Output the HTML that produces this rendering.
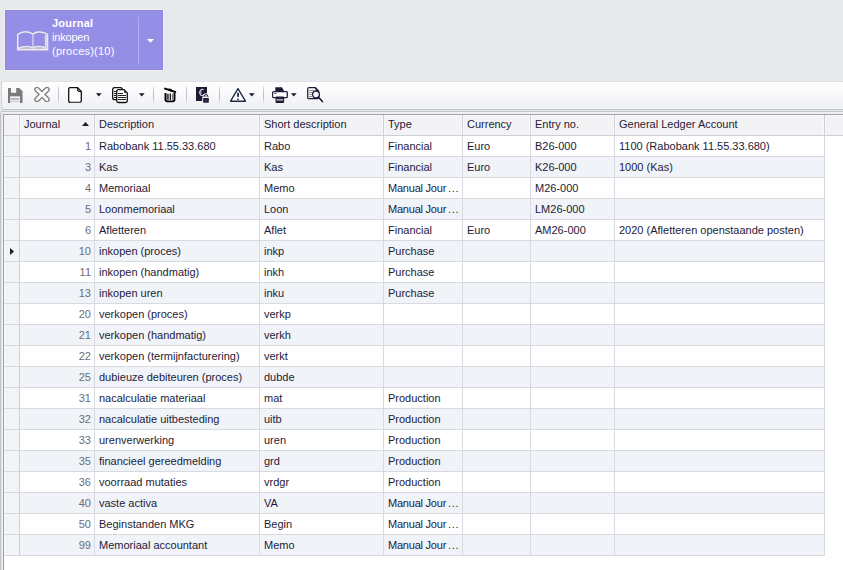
<!DOCTYPE html><html><head><meta charset="utf-8"><style>*{margin:0;padding:0;box-sizing:border-box}
html,body{width:843px;height:570px;overflow:hidden;background:#e8e9ed;font-family:"Liberation Sans",sans-serif;font-size:11px;position:relative}
#tile{position:absolute;left:4px;top:9px;width:160px;height:62px;background:#eef0e9}
#tile .in{position:absolute;left:1px;top:1px;width:158px;height:60px;background:#958ee7;border:1px solid #908ae6}
#tile .t{position:absolute;left:48px;color:#fff;white-space:nowrap;line-height:14px;letter-spacing:0.22px}
#tile .div{position:absolute;left:134px;top:8px;width:1px;height:47px;background:#b2adf0}
#tb{position:absolute;left:1px;top:81px;width:850px;height:29px;border-radius:3px 0 0 3px;background:linear-gradient(#fefefe,#fcfcfd 25%,#f2f3f7 75%,#eff0f4 96%,#f8f9fb 96%);border:1px solid #e0e1e5;border-bottom-color:#b9bbc2;border-left-color:#d4d5da;border-right:none}
.sep{position:absolute;top:84px;width:1px;height:21px;background:linear-gradient(rgba(190,192,200,0),#bfc1c8 35%,#bfc1c8 65%,rgba(190,192,200,0))}
.ic{position:absolute}
#panel{position:absolute;left:0;top:111px;width:850px;height:470px;background:#eeeff2;border:1px solid #c3c4c9;border-right:none;border-radius:3px 0 0 0}
#panel2{position:absolute;left:1px;top:112px;width:850px;height:470px;border-left:1px solid #e3e4e8;}
#gridbg{position:absolute;left:3px;top:114px;width:840px;height:456px;background:#fff;border-left:1px solid #9d9fab;border-top:1px solid #9d9fab}
.hdr{position:absolute;left:4px;top:115px;width:839px;height:21px;background:#f3f3f5;border-top:1px solid #fbfbfc;border-bottom:1px solid #cfd0d6}
.hl4{position:absolute;left:4px;top:115px;width:1px;height:455px;background:#fafbfc}
.hv{position:absolute;top:115px;width:1px;height:20px;background:#cfd0d6}
.hvl{position:absolute;top:116px;width:1px;height:19px;background:#f9f9fb}
.ht{position:absolute;top:115px;line-height:20px;height:20px;color:#1e1b38;white-space:nowrap;margin-top:-1px}
.sort{position:absolute;left:82px;top:122px}
.rh{position:absolute;left:5px;width:14px;height:20px;background:#f3f4f6}
.row{position:absolute;left:20px;width:804px;height:20px;background:#fff}
.row.st{background:#f0f3f8}
.hl{position:absolute;left:4px;width:820px;height:1px;background:#d9dadf}
.bv{position:absolute;top:136px;width:1px;height:420px;background:#d9dadf}
.rhv{position:absolute;left:19px;top:135px;width:1px;height:421px;background:#cfd0d6}
.num{position:absolute;left:20px;width:71px;text-align:right;line-height:20px;color:#6d6c78;white-space:nowrap}
.tx{position:absolute;line-height:20px;color:#1e1b38;white-space:nowrap}
.arrowsel{position:absolute;left:10px;top:248px;width:0;height:0;border-left:4px solid #1a1830;border-top:3.5px solid transparent;border-bottom:3.5px solid transparent}
</style></head><body>
<div id="tile"><div class="in"></div>
<svg style="position:absolute;left:10px;top:19px" width="40" height="25" viewBox="0 0 40 25"><g fill="none" stroke="#ecece4" stroke-width="1.5" stroke-linejoin="round">
<path d="M3.7 21.2 V6.4 Q8.5 3.2 13.5 4 Q17 4.6 19 6.2"/>
<path d="M19 6.2 Q21 4.5 24 4 Q29.5 3.4 33.5 6.4 V21.2"/>
<path d="M4 20.4 Q8 18.6 13 18.6 Q16.5 18.8 19 19.8 Q22 18.6 25 18.6 Q29 18.8 32 20.2"/>
</g>
<path d="M19 6.2 V19.8" stroke="#e4e3ea" stroke-width="1.1"/>
<rect x="2.9" y="20.5" width="31.4" height="2" fill="#ecece4"/>
<rect x="30.8" y="7" width="2" height="12.5" fill="#dedce8"/>
</svg>
<div class="t" style="top:7px;font-weight:bold">Journal</div>
<div class="t" style="top:21px;letter-spacing:-0.2px">inkopen</div>
<div class="t" style="top:35px">(proces)(10)</div>
<div class="div"></div>
<svg style="position:absolute;left:142px;top:29px" width="10" height="6" viewBox="0 0 10 6"><path d="M1 1 H8 L4.5 4.8Z" fill="#fff"/></svg>
</div>
<div id="panel"></div><div id="panel2"></div><div id="tb"></div>
<div class="sep" style="left:58px"></div>
<div class="sep" style="left:153px"></div>
<div class="sep" style="left:186px"></div>
<div class="sep" style="left:219px"></div>
<div class="sep" style="left:263px"></div>
<!-- save -->
<svg class="ic" style="left:8px;top:88px" width="15" height="15" viewBox="0 0 15 15">
<path d="M0 0 H11.3 L14.5 3.2 V15 H0 Z" fill="#7b7b7b"/>
<rect x="3" y="0" width="5.2" height="4.8" fill="#f7f7f7"/>
<rect x="2.2" y="8.3" width="9.8" height="6.7" fill="#f4f4f4"/>
<rect x="2.8" y="10" width="8.6" height="2" fill="#b8b8b8"/>
<rect x="2.8" y="13" width="8.6" height="1" fill="#c4c4c4"/>
</svg>
<!-- cancel X -->
<svg class="ic" style="left:34px;top:87px" width="16" height="15" viewBox="0 0 16 15">
<g stroke-linecap="round"><path d="M3 2.5 L13 12.5 M13 2.5 L3 12.5" stroke="#7e7e7e" stroke-width="5.5"/>
<path d="M3 2.5 L13 12.5 M13 2.5 L3 12.5" stroke="#fbfbfb" stroke-width="3"/></g>
</svg>
<!-- new doc -->
<svg class="ic" style="left:67px;top:86px" width="16" height="18" viewBox="0 0 16 18">
<path d="M1.7 3.2 Q1.7 1.7 3.2 1.7 H10.6 L14.3 5.4 V14.8 Q14.3 16.3 12.8 16.3 H3.2 Q1.7 16.3 1.7 14.8 Z" fill="#fff" stroke="#111" stroke-width="1.3"/>
<path d="M10.6 1.7 V4 Q10.6 5.4 12 5.4 H14.3 Z" fill="#8a8a8a" stroke="#111" stroke-width="1"/>
<path d="M3 16.5 H13" stroke="#555" stroke-width="0.9"/>
</svg>
<svg class="ic dd" style="left:96px;top:93px" width="6" height="4" viewBox="0 0 6 4"><path d="M0 0.2 H5.6 L2.8 3.6Z" fill="#15142b"/></svg>
<!-- copy -->
<svg class="ic" style="left:111px;top:86px" width="18" height="18" viewBox="0 0 18 18">
<rect x="1.7" y="1.7" width="9.6" height="12" rx="2" fill="#fff" stroke="#111" stroke-width="1.3"/>
<path d="M3 5.5 H5 M3 7.5 H5 M3 9.5 H5 M3 11.5 H5" stroke="#222" stroke-width="1"/>
<path d="M5.7 5.5 Q5.7 3.7 7.5 3.7 H13 L16.3 7 V14.8 Q16.3 16.5 14.6 16.5 H7.5 Q5.7 16.5 5.7 14.7 Z" fill="#fff" stroke="#111" stroke-width="1.3"/>

<path d="M13 3.7 V6 Q13 7 14 7 H16.3 Z" fill="#333"/>
<path d="M7 7.5 H12 M7 9.5 H15 M7 11.5 H15 M7 13.5 H15" stroke="#222" stroke-width="1"/>
</svg>
<svg class="ic dd" style="left:139px;top:93px" width="6" height="4" viewBox="0 0 6 4"><path d="M0 0.2 H5.6 L2.8 3.6Z" fill="#15142b"/></svg>
<!-- trash -->
<svg class="ic" style="left:163px;top:86px" width="14" height="18" viewBox="0 0 14 18">
<path d="M2 2.6 L12.3 6" stroke="#000" stroke-width="1.9" stroke-linecap="round"/>
<ellipse cx="7.2" cy="3.9" rx="2" ry="1.1" transform="rotate(18 7.2 3.9)" fill="#000"/>
<path d="M2.5 7 V13.6 Q2.5 15.4 4.3 15.4 H9.7 Q11.5 15.4 11.5 13.6 V7" fill="none" stroke="#000" stroke-width="1.9"/>
<rect x="3.8" y="7.8" width="2" height="6" fill="#4a4a4a"/>
<rect x="6.7" y="7.5" width="1.3" height="6.4" fill="#111"/>
<rect x="9" y="7.8" width="1" height="6" fill="#777"/>
</svg>
<!-- euro lock -->
<svg class="ic" style="left:195px;top:86px" width="15" height="18" viewBox="0 0 15 18">
<rect x="1" y="1" width="11" height="14" fill="#1c1a35"/>
<path d="M8.6 3.6 Q5.3 2.6 4.8 6.4 Q5.2 10.3 8 9.6" fill="none" stroke="#d8d8de" stroke-width="1.2"/>
<path d="M3.8 5.6 H7 M3.8 7.2 H7" stroke="#b8b8c0" stroke-width="0.8"/>
<path d="M9.2 12 V10.4 Q9.2 8.6 11 8.6 Q12.8 8.6 12.8 10.4 V12" fill="none" stroke="#ececf2" stroke-width="2.8"/>
<path d="M9.2 12 V10.4 Q9.2 8.6 11 8.6 Q12.8 8.6 12.8 10.4 V12" fill="none" stroke="#1c1a35" stroke-width="1"/>
<rect x="7.2" y="11" width="7.6" height="6.7" rx="0.8" fill="#f3f4f7"/>
<rect x="8.2" y="12" width="5.6" height="4.7" fill="#1c1a35"/>
<rect x="10.5" y="13.8" width="1" height="1" fill="#8888a0"/>
</svg>
<!-- warning -->
<svg class="ic" style="left:229px;top:87px" width="18" height="16" viewBox="0 0 18 16">
<path d="M9 1.7 L1.6 14.2 H16.4 Z" fill="#fff" stroke="#1e2842" stroke-width="1.35" stroke-linejoin="round"/>
<rect x="8.1" y="5.7" width="1.8" height="4.2" fill="#1e2842"/>
<rect x="8.1" y="11.6" width="1.8" height="1.3" fill="#1e2842"/>
</svg>
<svg class="ic dd" style="left:249px;top:93px" width="6" height="4" viewBox="0 0 6 4"><path d="M0 0.2 H5.6 L2.8 3.6Z" fill="#15142b"/></svg>
<!-- printer -->
<svg class="ic" style="left:271px;top:87px" width="18" height="17" viewBox="0 0 18 17">
<path d="M4.3 0.2 H11 L13.3 4.6 H4.3 Z" fill="#1c1a35"/>
<rect x="1.6" y="4.6" width="14.8" height="6" rx="1" fill="#fff" stroke="#1c1a35" stroke-width="1.15"/>
<rect x="3" y="6" width="2.5" height="1" fill="#666"/>
<path d="M15.6 5.5 V10" stroke="#999" stroke-width="0.8"/>
<rect x="4.5" y="9.4" width="8.6" height="6.6" rx="0.9" fill="#1c1a35"/>
<rect x="5.5" y="11.9" width="6.6" height="1.9" fill="#9a9aaa"/>
</svg>
<svg class="ic dd" style="left:291px;top:93px" width="6" height="4" viewBox="0 0 6 4"><path d="M0 0.2 H5.6 L2.8 3.6Z" fill="#15142b"/></svg>
<!-- preview -->
<svg class="ic" style="left:306px;top:86px" width="18" height="18" viewBox="0 0 18 18">
<path d="M12.6 5 V11.5 Q12.6 12.7 11.4 12.7 H3 Q1.7 12.7 1.7 11.4 V3 Q1.7 1.7 3 1.7 H9.4 Z" fill="#fff" stroke="#1c1a35" stroke-width="1.25"/>
<path d="M9.6 1.8 L10 4.4 L12.5 4.9" fill="none" stroke="#1c1a35" stroke-width="1"/>
<path d="M3 4.5 H8.5 M3 6.5 H7 M3 8.5 H6 M3 10.5 H6" stroke="#8c8c9c" stroke-width="1"/>
<circle cx="10" cy="8.4" r="3.4" fill="#f6f6f8" stroke="#1c1a35" stroke-width="1.25"/>
<path d="M12.4 11 L16.4 15.6" stroke="#1c1a35" stroke-width="1.6" stroke-linecap="round"/>
</svg>
<div id="gridbg"></div><div class="hl4"></div>

<div id="grid">
<div class="hdr"></div>
<div class="hv" style="left:19px"></div>
<div class="hvl" style="left:18px"></div><div class="hvl" style="left:20px"></div>
<div class="hv" style="left:94px"></div>
<div class="hvl" style="left:93px"></div><div class="hvl" style="left:95px"></div>
<div class="hv" style="left:259px"></div>
<div class="hvl" style="left:258px"></div><div class="hvl" style="left:260px"></div>
<div class="hv" style="left:383px"></div>
<div class="hvl" style="left:382px"></div><div class="hvl" style="left:384px"></div>
<div class="hv" style="left:462px"></div>
<div class="hvl" style="left:461px"></div><div class="hvl" style="left:463px"></div>
<div class="hv" style="left:530px"></div>
<div class="hvl" style="left:529px"></div><div class="hvl" style="left:531px"></div>
<div class="hv" style="left:614px"></div>
<div class="hvl" style="left:613px"></div><div class="hvl" style="left:615px"></div>
<div class="hv" style="left:824px"></div>
<div class="hvl" style="left:823px"></div><div class="hvl" style="left:825px"></div>
<div class="ht" style="left:24px">Journal</div>
<div class="ht" style="left:99px">Description</div>
<div class="ht" style="left:264px">Short description</div>
<div class="ht" style="left:388px">Type</div>
<div class="ht" style="left:467px">Currency</div>
<div class="ht" style="left:535px">Entry no.</div>
<div class="ht" style="left:619px">General Ledger Account</div>
<svg class="sort" width="7" height="4" viewBox="0 0 7 4"><path d="M0 4 L3.5 0 L7 4Z" fill="#1d1a33"/></svg>
<div class="rh" style="top:136px"></div>
<div class="row" style="top:136px"></div>
<div class="hl" style="top:156px"></div>
<div class="num" style="top:136px">1</div>
<div class="tx" style="top:136px;left:99px">Rabobank 11.55.33.680</div>
<div class="tx" style="top:136px;left:264px">Rabo</div>
<div class="tx" style="top:136px;left:388px">Financial</div>
<div class="tx" style="top:136px;left:467px">Euro</div>
<div class="tx" style="top:136px;left:535px">B26-000</div>
<div class="tx" style="top:136px;left:619px">1100 (Rabobank 11.55.33.680)</div>
<div class="rh" style="top:157px"></div>
<div class="row st" style="top:157px"></div>
<div class="hl" style="top:177px"></div>
<div class="num" style="top:157px">3</div>
<div class="tx" style="top:157px;left:99px">Kas</div>
<div class="tx" style="top:157px;left:264px">Kas</div>
<div class="tx" style="top:157px;left:388px">Financial</div>
<div class="tx" style="top:157px;left:467px">Euro</div>
<div class="tx" style="top:157px;left:535px">K26-000</div>
<div class="tx" style="top:157px;left:619px">1000 (Kas)</div>
<div class="rh" style="top:178px"></div>
<div class="row" style="top:178px"></div>
<div class="hl" style="top:198px"></div>
<div class="num" style="top:178px">4</div>
<div class="tx" style="top:178px;left:99px">Memoriaal</div>
<div class="tx" style="top:178px;left:264px">Memo</div>
<div class="tx" style="top:178px;left:388px"><span style="letter-spacing:-0.22px">Manual Jour</span><span style="letter-spacing:0.75px;margin-left:1.8px">...</span></div>
<div class="tx" style="top:178px;left:535px">M26-000</div>
<div class="rh" style="top:199px"></div>
<div class="row st" style="top:199px"></div>
<div class="hl" style="top:219px"></div>
<div class="num" style="top:199px">5</div>
<div class="tx" style="top:199px;left:99px">Loonmemoriaal</div>
<div class="tx" style="top:199px;left:264px">Loon</div>
<div class="tx" style="top:199px;left:388px"><span style="letter-spacing:-0.22px">Manual Jour</span><span style="letter-spacing:0.75px;margin-left:1.8px">...</span></div>
<div class="tx" style="top:199px;left:535px">LM26-000</div>
<div class="rh" style="top:220px"></div>
<div class="row" style="top:220px"></div>
<div class="hl" style="top:240px"></div>
<div class="num" style="top:220px">6</div>
<div class="tx" style="top:220px;left:99px">Afletteren</div>
<div class="tx" style="top:220px;left:264px">Aflet</div>
<div class="tx" style="top:220px;left:388px">Financial</div>
<div class="tx" style="top:220px;left:467px">Euro</div>
<div class="tx" style="top:220px;left:535px">AM26-000</div>
<div class="tx" style="top:220px;left:619px">2020 (Afletteren openstaande posten)</div>
<div class="rh" style="top:241px"></div>
<div class="row st" style="top:241px"></div>
<div class="hl" style="top:261px"></div>
<div class="num" style="top:241px">10</div>
<div class="tx" style="top:241px;left:99px">inkopen (proces)</div>
<div class="tx" style="top:241px;left:264px">inkp</div>
<div class="tx" style="top:241px;left:388px">Purchase</div>
<div class="rh" style="top:262px"></div>
<div class="row" style="top:262px"></div>
<div class="hl" style="top:282px"></div>
<div class="num" style="top:262px">11</div>
<div class="tx" style="top:262px;left:99px">inkopen (handmatig)</div>
<div class="tx" style="top:262px;left:264px">inkh</div>
<div class="tx" style="top:262px;left:388px">Purchase</div>
<div class="rh" style="top:283px"></div>
<div class="row st" style="top:283px"></div>
<div class="hl" style="top:303px"></div>
<div class="num" style="top:283px">13</div>
<div class="tx" style="top:283px;left:99px">inkopen uren</div>
<div class="tx" style="top:283px;left:264px">inku</div>
<div class="tx" style="top:283px;left:388px">Purchase</div>
<div class="rh" style="top:304px"></div>
<div class="row" style="top:304px"></div>
<div class="hl" style="top:324px"></div>
<div class="num" style="top:304px">20</div>
<div class="tx" style="top:304px;left:99px">verkopen (proces)</div>
<div class="tx" style="top:304px;left:264px">verkp</div>
<div class="rh" style="top:325px"></div>
<div class="row st" style="top:325px"></div>
<div class="hl" style="top:345px"></div>
<div class="num" style="top:325px">21</div>
<div class="tx" style="top:325px;left:99px">verkopen (handmatig)</div>
<div class="tx" style="top:325px;left:264px">verkh</div>
<div class="rh" style="top:346px"></div>
<div class="row" style="top:346px"></div>
<div class="hl" style="top:366px"></div>
<div class="num" style="top:346px">22</div>
<div class="tx" style="top:346px;left:99px">verkopen (termijnfacturering)</div>
<div class="tx" style="top:346px;left:264px">verkt</div>
<div class="rh" style="top:367px"></div>
<div class="row st" style="top:367px"></div>
<div class="hl" style="top:387px"></div>
<div class="num" style="top:367px">25</div>
<div class="tx" style="top:367px;left:99px">dubieuze debiteuren (proces)</div>
<div class="tx" style="top:367px;left:264px">dubde</div>
<div class="rh" style="top:388px"></div>
<div class="row" style="top:388px"></div>
<div class="hl" style="top:408px"></div>
<div class="num" style="top:388px">31</div>
<div class="tx" style="top:388px;left:99px">nacalculatie materiaal</div>
<div class="tx" style="top:388px;left:264px">mat</div>
<div class="tx" style="top:388px;left:388px">Production</div>
<div class="rh" style="top:409px"></div>
<div class="row st" style="top:409px"></div>
<div class="hl" style="top:429px"></div>
<div class="num" style="top:409px">32</div>
<div class="tx" style="top:409px;left:99px">nacalculatie uitbesteding</div>
<div class="tx" style="top:409px;left:264px">uitb</div>
<div class="tx" style="top:409px;left:388px">Production</div>
<div class="rh" style="top:430px"></div>
<div class="row" style="top:430px"></div>
<div class="hl" style="top:450px"></div>
<div class="num" style="top:430px">33</div>
<div class="tx" style="top:430px;left:99px">urenverwerking</div>
<div class="tx" style="top:430px;left:264px">uren</div>
<div class="tx" style="top:430px;left:388px">Production</div>
<div class="rh" style="top:451px"></div>
<div class="row st" style="top:451px"></div>
<div class="hl" style="top:471px"></div>
<div class="num" style="top:451px">35</div>
<div class="tx" style="top:451px;left:99px">financieel gereedmelding</div>
<div class="tx" style="top:451px;left:264px">grd</div>
<div class="tx" style="top:451px;left:388px">Production</div>
<div class="rh" style="top:472px"></div>
<div class="row" style="top:472px"></div>
<div class="hl" style="top:492px"></div>
<div class="num" style="top:472px">36</div>
<div class="tx" style="top:472px;left:99px">voorraad mutaties</div>
<div class="tx" style="top:472px;left:264px">vrdgr</div>
<div class="tx" style="top:472px;left:388px">Production</div>
<div class="rh" style="top:493px"></div>
<div class="row st" style="top:493px"></div>
<div class="hl" style="top:513px"></div>
<div class="num" style="top:493px">40</div>
<div class="tx" style="top:493px;left:99px">vaste activa</div>
<div class="tx" style="top:493px;left:264px">VA</div>
<div class="tx" style="top:493px;left:388px"><span style="letter-spacing:-0.22px">Manual Jour</span><span style="letter-spacing:0.75px;margin-left:1.8px">...</span></div>
<div class="rh" style="top:514px"></div>
<div class="row" style="top:514px"></div>
<div class="hl" style="top:534px"></div>
<div class="num" style="top:514px">50</div>
<div class="tx" style="top:514px;left:99px">Beginstanden MKG</div>
<div class="tx" style="top:514px;left:264px">Begin</div>
<div class="tx" style="top:514px;left:388px"><span style="letter-spacing:-0.22px">Manual Jour</span><span style="letter-spacing:0.75px;margin-left:1.8px">...</span></div>
<div class="rh" style="top:535px"></div>
<div class="row st" style="top:535px"></div>
<div class="hl" style="top:555px"></div>
<div class="num" style="top:535px">99</div>
<div class="tx" style="top:535px;left:99px">Memoriaal accountant</div>
<div class="tx" style="top:535px;left:264px">Memo</div>
<div class="tx" style="top:535px;left:388px"><span style="letter-spacing:-0.22px">Manual Jour</span><span style="letter-spacing:0.75px;margin-left:1.8px">...</span></div>
<div class="bv" style="left:94px"></div>
<div class="bv" style="left:259px"></div>
<div class="bv" style="left:383px"></div>
<div class="bv" style="left:462px"></div>
<div class="bv" style="left:530px"></div>
<div class="bv" style="left:614px"></div>
<div class="bv" style="left:824px"></div>
<div class="rhv"></div>
<svg style="position:absolute;left:10px;top:248px" width="5" height="8" viewBox="0 0 5 8"><path d="M0 0 L4 3.5 L0 7 Z" fill="#1a1830"/></svg>
</div>
</body></html>
